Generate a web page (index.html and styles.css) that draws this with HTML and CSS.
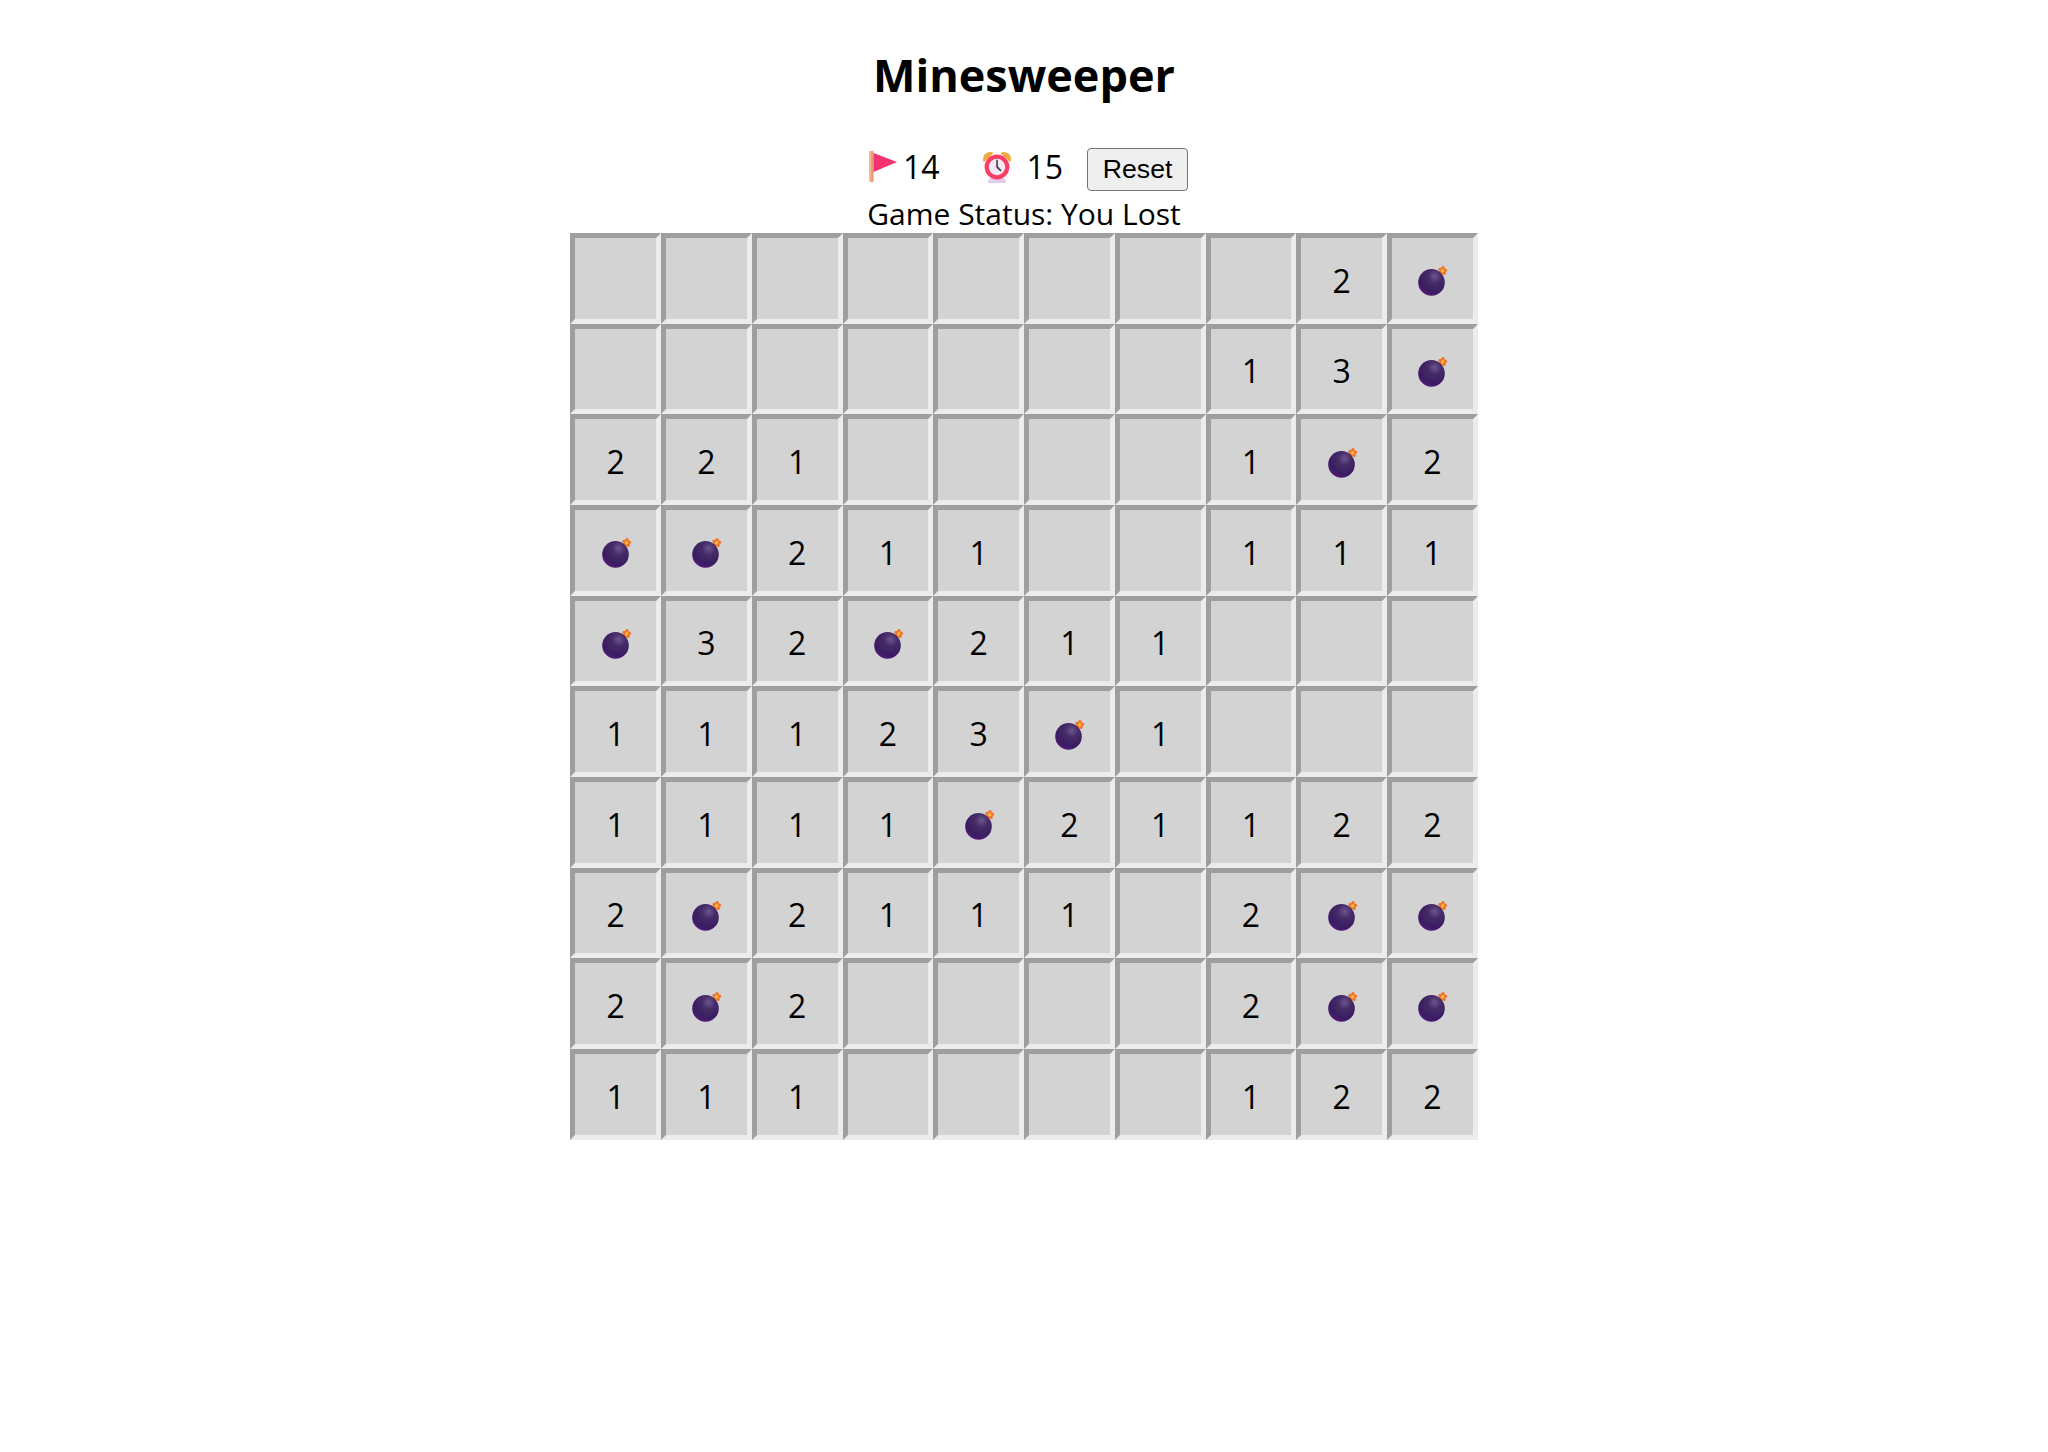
FILE: index.html
```html
<!DOCTYPE html>
<html lang="en">
<head>
  <meta charset="UTF-8">
  <title>Minesweeper</title>
  <link rel="stylesheet" href="styles.css">
</head>
<body>
  <svg class="defs" width="0" height="0">
    <defs>
      <radialGradient id="bombFill" cx="0.62" cy="0.28" r="0.85">
        <stop offset="0" stop-color="#6b5690"/>
        <stop offset="0.3" stop-color="#452c66"/>
        <stop offset="0.7" stop-color="#3a1c62"/>
        <stop offset="1" stop-color="#641a8a"/>
      </radialGradient>
      <symbol id="bomb" viewBox="0 0 32 32">
        <circle cx="26.6" cy="6.8" r="3.6" fill="#f59a32"/>
        <circle cx="24" cy="5.4" r="1.6" fill="#f0702c"/>
        <circle cx="27" cy="3.6" r="1.5" fill="#f0702c"/>
        <circle cx="29.6" cy="6.2" r="1.5" fill="#f0702c"/>
        <circle cx="28.2" cy="9.6" r="1.5" fill="#f0702c"/>
        <circle cx="24.6" cy="9" r="1.5" fill="#f0702c"/>
        <circle cx="26.6" cy="6.8" r="1.3" fill="#ffc04a"/>
        <circle cx="15.5" cy="18.4" r="13.3" fill="url(#bombFill)"/>
      </symbol>
    </defs>
  </svg>

  <h1 class="title">Minesweeper</h1>

  <div class="stats">
    <svg class="stat-icon flag-icon" viewBox="0 0 32 32">
      <defs>
        <linearGradient id="poleFill" x1="0" x2="1" y1="0" y2="0">
          <stop offset="0" stop-color="#f9c3a5"/>
          <stop offset="1" stop-color="#e28a63"/>
        </linearGradient>
      </defs>
      <rect x="2" y="0" width="4.5" height="31" rx="1" fill="url(#poleFill)"/>
      <path d="M6.5 2 L30 11 L6.5 21 Z" fill="#f2336f"/>
    </svg>
    <span class="stat-value flag-count">14</span>
    <svg class="stat-icon clock-icon" viewBox="0 0 32 32">
      <path d="M2.2 10 C1 4 6 0 11 1.2 C12 1.6 12.2 2.4 11.6 3 L3.6 10.4 C3 10.9 2.4 10.7 2.2 10 Z" fill="#eeaa3c"/>
      <path d="M29.8 10 C31 4 26 0 21 1.2 C20 1.6 19.8 2.4 20.4 3 L28.4 10.4 C29 10.9 29.6 10.7 29.8 10 Z" fill="#eeaa3c"/>
      <path d="M7 32 C7 27.5 10 25.5 16 25.5 C22 25.5 25 27.5 25 32 Z" fill="#e2cdee"/>
      <circle cx="16" cy="16" r="12.4" fill="#fb3e66"/>
      <circle cx="16" cy="16" r="8.2" fill="#f6e9f3"/>
      <path d="M15.2 8.8 L16.8 8.8 L17 15.6 L20.6 19.2 L19.4 20.4 L15.2 16.4 Z" fill="#4c4658"/>
    </svg>
    <span class="stat-value time-count">15</span>
    <button class="reset-btn">Reset</button>
  </div>

  <div class="status">Game Status: You Lost</div>

  <div class="board">
    <div class="cell"></div><div class="cell"></div><div class="cell"></div><div class="cell"></div><div class="cell"></div><div class="cell"></div><div class="cell"></div><div class="cell"></div><div class="cell">2</div><div class="cell"><svg class="bomb"><use href="#bomb"/></svg></div>
    <div class="cell"></div><div class="cell"></div><div class="cell"></div><div class="cell"></div><div class="cell"></div><div class="cell"></div><div class="cell"></div><div class="cell">1</div><div class="cell">3</div><div class="cell"><svg class="bomb"><use href="#bomb"/></svg></div>
    <div class="cell">2</div><div class="cell">2</div><div class="cell">1</div><div class="cell"></div><div class="cell"></div><div class="cell"></div><div class="cell"></div><div class="cell">1</div><div class="cell"><svg class="bomb"><use href="#bomb"/></svg></div><div class="cell">2</div>
    <div class="cell"><svg class="bomb"><use href="#bomb"/></svg></div><div class="cell"><svg class="bomb"><use href="#bomb"/></svg></div><div class="cell">2</div><div class="cell">1</div><div class="cell">1</div><div class="cell"></div><div class="cell"></div><div class="cell">1</div><div class="cell">1</div><div class="cell">1</div>
    <div class="cell"><svg class="bomb"><use href="#bomb"/></svg></div><div class="cell">3</div><div class="cell">2</div><div class="cell"><svg class="bomb"><use href="#bomb"/></svg></div><div class="cell">2</div><div class="cell">1</div><div class="cell">1</div><div class="cell"></div><div class="cell"></div><div class="cell"></div>
    <div class="cell">1</div><div class="cell">1</div><div class="cell">1</div><div class="cell">2</div><div class="cell">3</div><div class="cell"><svg class="bomb"><use href="#bomb"/></svg></div><div class="cell">1</div><div class="cell"></div><div class="cell"></div><div class="cell"></div>
    <div class="cell">1</div><div class="cell">1</div><div class="cell">1</div><div class="cell">1</div><div class="cell"><svg class="bomb"><use href="#bomb"/></svg></div><div class="cell">2</div><div class="cell">1</div><div class="cell">1</div><div class="cell">2</div><div class="cell">2</div>
    <div class="cell">2</div><div class="cell"><svg class="bomb"><use href="#bomb"/></svg></div><div class="cell">2</div><div class="cell">1</div><div class="cell">1</div><div class="cell">1</div><div class="cell"></div><div class="cell">2</div><div class="cell"><svg class="bomb"><use href="#bomb"/></svg></div><div class="cell"><svg class="bomb"><use href="#bomb"/></svg></div>
    <div class="cell">2</div><div class="cell"><svg class="bomb"><use href="#bomb"/></svg></div><div class="cell">2</div><div class="cell"></div><div class="cell"></div><div class="cell"></div><div class="cell"></div><div class="cell">2</div><div class="cell"><svg class="bomb"><use href="#bomb"/></svg></div><div class="cell"><svg class="bomb"><use href="#bomb"/></svg></div>
    <div class="cell">1</div><div class="cell">1</div><div class="cell">1</div><div class="cell"></div><div class="cell"></div><div class="cell"></div><div class="cell"></div><div class="cell">1</div><div class="cell">2</div><div class="cell">2</div>
  </div>
</body>
</html>
```

FILE: styles.css
```css
body {
  margin: 0;
  font-family: "Open Sans", sans-serif;
  color: #000;
  background: #fff;
}
.defs { position: absolute; }
.title {
  margin: 0;
  padding-top: 45px;
  height: 103px;
  line-height: 60px;
  font-size: 45px;
  font-weight: 700;
  text-align: center;
}
.stats {
  display: flex;
  justify-content: center;
  align-items: center;
  height: 43px;
  padding-left: 7px;
  font-size: 32px;
}
.stat-icon {
  width: 32px;
  height: 32px;
  margin-bottom: 5px;
}
.flag-icon { margin-right: 4px; }
.clock-icon { margin-right: 14px; }
.stat-value { margin-bottom: 6px; }
.flag-count { margin-right: 41px; }
.time-count { margin-right: 24px; }
.reset-btn {
  width: 101px;
  height: 43px;
  padding: 0;
  font-family: "Liberation Sans", sans-serif;
  font-size: 26.67px;
  color: #000;
  background: #efefef;
  border: 1px solid #767676;
  border-radius: 4px;
}
.status {
  height: 42px;
  line-height: 45px;
  font-size: 30px;
  text-align: center;
}
.board {
  display: grid;
  grid-template-columns: repeat(10, 90.75px);
  grid-auto-rows: 90.667px;
  justify-content: center;
}
.cell {
  box-sizing: border-box;
  display: flex;
  justify-content: center;
  align-items: center;
  padding-top: 4px;
  border: 5.33px solid;
  border-color: #9e9e9e #ececec #ececec #9e9e9e;
  background: #d3d3d3;
  font-size: 32px;
}
.bomb {
  width: 32px;
  height: 32px;
}
```
